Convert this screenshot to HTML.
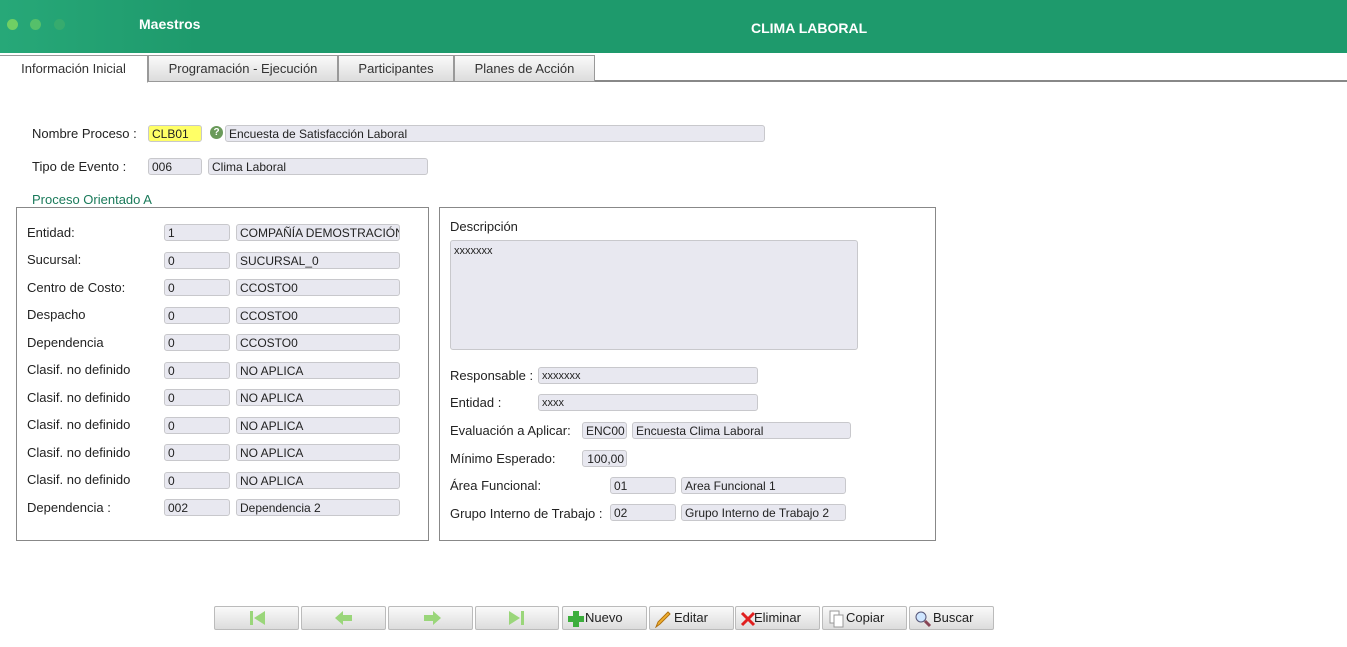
<!DOCTYPE html>
<html><head><meta charset="utf-8"><style>
*{margin:0;padding:0;box-sizing:border-box}
body{width:1347px;height:647px;background:#fff;position:relative;overflow:hidden;font-family:"Liberation Sans",sans-serif;color:#222}
.hdr{position:absolute;left:0;top:0;width:1347px;height:53px;background:linear-gradient(90deg,#27a878 0,#1e9a6c 200px,#1e9a6c)}
.dot{position:absolute;top:19px;width:11px;height:11px;border-radius:50%}
.t{position:absolute;font-size:13px;white-space:nowrap}
.i{position:absolute;height:17px;border:1px solid #c8c8cc;border-radius:3px;background:#e8e8f0;font-size:12px;padding-left:3px;line-height:17px;white-space:nowrap;overflow:hidden}
.tab{position:absolute;top:55px;height:27px;border:1px solid #999;background:linear-gradient(#fafafa,#dcdcdc);font-size:13px;text-align:center;line-height:25px;color:#333}
.box{position:absolute;border:1px solid #888}
.b{position:absolute;top:606px;width:85px;height:24px;border:1px solid #bbb;border-radius:2px;background:linear-gradient(#fafafa,#dcdcdc);font-size:13px;line-height:22px;color:#222}
</style></head><body>
<div class="hdr">
<div class="dot" style="left:7px;background:#6fcf64"></div>
<div class="dot" style="left:30px;background:#55c06a"></div>
<div class="dot" style="left:54px;background:#36ab6e"></div>
<div class="t" style="left:139px;top:16px;color:#fff;font-weight:bold;font-size:14px">Maestros</div>
<div class="t" style="left:751px;top:20px;color:#fff;font-weight:bold;font-size:14px">CLIMA LABORAL</div>
</div>
<div style="position:absolute;left:0;top:80px;width:1347px;height:2px;background:#888"></div>
<div class="tab" style="left:0;width:148px;background:#fff;border-bottom-color:#fff;border-left:none;height:28px">Información Inicial</div>
<div class="tab" style="left:148px;width:190px">Programación - Ejecución</div>
<div class="tab" style="left:338px;width:116px">Participantes</div>
<div class="tab" style="left:454px;width:141px">Planes de Acción</div>

<div class="t" style="left:32px;top:126px">Nombre Proceso :</div>
<div class="i" style="left:148px;top:125px;width:54px;background:#ffff66">CLB01</div>
<div style="position:absolute;left:210px;top:126px;width:13px;height:13px;border-radius:50%;background:#6a9a5a;color:#fff;font-size:10px;text-align:center;line-height:13px;font-weight:bold">?</div>
<div class="i" style="left:225px;top:125px;width:540px">Encuesta de Satisfacción Laboral</div>
<div class="t" style="left:32px;top:159px">Tipo de Evento :</div>
<div class="i" style="left:148px;top:158px;width:54px">006</div>
<div class="i" style="left:208px;top:158px;width:220px">Clima Laboral</div>
<div class="t" style="left:32px;top:192px;color:#1a7a5a">Proceso Orientado A</div>

<div class="box" style="left:16px;top:207px;width:413px;height:334px"></div>
<div class="box" style="left:439px;top:207px;width:497px;height:334px"></div>

<div class="t" style="left:27px;top:225px">Entidad:</div><div class="i" style="left:164px;top:224px;width:66px">1</div><div class="i" style="left:236px;top:224px;width:164px">COMPAÑÍA DEMOSTRACIÓN</div>
<div class="t" style="left:27px;top:252px">Sucursal:</div><div class="i" style="left:164px;top:252px;width:66px">0</div><div class="i" style="left:236px;top:252px;width:164px">SUCURSAL_0</div>
<div class="t" style="left:27px;top:280px">Centro de Costo:</div><div class="i" style="left:164px;top:279px;width:66px">0</div><div class="i" style="left:236px;top:279px;width:164px">CCOSTO0</div>
<div class="t" style="left:27px;top:307px">Despacho</div><div class="i" style="left:164px;top:307px;width:66px">0</div><div class="i" style="left:236px;top:307px;width:164px">CCOSTO0</div>
<div class="t" style="left:27px;top:335px">Dependencia</div><div class="i" style="left:164px;top:334px;width:66px">0</div><div class="i" style="left:236px;top:334px;width:164px">CCOSTO0</div>
<div class="t" style="left:27px;top:362px">Clasif. no definido</div><div class="i" style="left:164px;top:362px;width:66px">0</div><div class="i" style="left:236px;top:362px;width:164px">NO APLICA</div>
<div class="t" style="left:27px;top:390px">Clasif. no definido</div><div class="i" style="left:164px;top:389px;width:66px">0</div><div class="i" style="left:236px;top:389px;width:164px">NO APLICA</div>
<div class="t" style="left:27px;top:417px">Clasif. no definido</div><div class="i" style="left:164px;top:417px;width:66px">0</div><div class="i" style="left:236px;top:417px;width:164px">NO APLICA</div>
<div class="t" style="left:27px;top:445px">Clasif. no definido</div><div class="i" style="left:164px;top:444px;width:66px">0</div><div class="i" style="left:236px;top:444px;width:164px">NO APLICA</div>
<div class="t" style="left:27px;top:472px">Clasif. no definido</div><div class="i" style="left:164px;top:472px;width:66px">0</div><div class="i" style="left:236px;top:472px;width:164px">NO APLICA</div>
<div class="t" style="left:27px;top:500px">Dependencia :</div><div class="i" style="left:164px;top:499px;width:66px">002</div><div class="i" style="left:236px;top:499px;width:164px">Dependencia 2</div>

<div class="t" style="left:450px;top:219px">Descripción</div>
<div class="i" style="left:450px;top:240px;width:408px;height:110px;font-size:11px;padding-top:3px;line-height:14px">xxxxxxx</div>
<div class="t" style="left:450px;top:368px">Responsable :</div><div class="i" style="left:538px;top:367px;width:220px;font-size:11px">xxxxxxx</div>
<div class="t" style="left:450px;top:395px">Entidad :</div><div class="i" style="left:538px;top:394px;width:220px;font-size:11px">xxxx</div>
<div class="t" style="left:450px;top:423px">Evaluación a Aplicar:</div><div class="i" style="left:582px;top:422px;width:45px">ENC00</div><div class="i" style="left:632px;top:422px;width:219px">Encuesta Clima Laboral</div>
<div class="t" style="left:450px;top:451px">Mínimo Esperado:</div><div class="i" style="left:582px;top:450px;width:45px;text-align:right;padding-right:2px">100,00</div>
<div class="t" style="left:450px;top:478px">Área Funcional:</div><div class="i" style="left:610px;top:477px;width:66px">01</div><div class="i" style="left:681px;top:477px;width:165px">Area Funcional 1</div>
<div class="t" style="left:450px;top:506px">Grupo Interno de Trabajo :</div><div class="i" style="left:610px;top:504px;width:66px">02</div><div class="i" style="left:681px;top:504px;width:165px">Grupo Interno de Trabajo 2</div>

<div class="b" style="left:214px"><svg width="85" height="22"><rect x="35" y="4" width="3" height="14" fill="#9ad67a"/><path d="M50 4 L39 11 L50 18Z" fill="#9ad67a"/></svg></div>
<div class="b" style="left:301px"><svg width="85" height="22"><path d="M33 11 L41 4 V8 H50 V14 H41 V18Z" fill="#9ad67a"/></svg></div>
<div class="b" style="left:388px"><svg width="85" height="22"><path d="M52 11 L44 4 V8 H35 V14 H44 V18Z" fill="#9ad67a"/></svg></div>
<div class="b" style="left:475px;width:84px"><svg width="85" height="22"><path d="M33 4 L44 11 L33 18Z" fill="#9ad67a"/><rect x="45" y="4" width="3" height="14" fill="#9ad67a"/></svg></div>
<div class="b" style="left:562px"><svg width="18" height="18" style="position:absolute;left:4px;top:3px"><path d="M6 1H12V6H17V12H12V17H6V12H1V6H6Z" fill="#3cae3c"/></svg><span style="position:absolute;left:22px">Nuevo</span></div>
<div class="b" style="left:649px"><svg width="18" height="18" style="position:absolute;left:4px;top:3px"><path d="M2 17 L4 12 L14 2 L16 4 L6 14Z" fill="#f0b030" stroke="#b07010"/></svg><span style="position:absolute;left:24px">Editar</span></div>
<div class="b" style="left:735px"><svg width="16" height="16" style="position:absolute;left:4px;top:4px"><path d="M2 2 L14 14 M14 2 L2 14" stroke="#e02020" stroke-width="3"/></svg><span style="position:absolute;left:18px">Eliminar</span></div>
<div class="b" style="left:822px"><svg width="16" height="18" style="position:absolute;left:6px;top:3px"><rect x="1" y="1" width="9" height="12" fill="#fff" stroke="#999"/><rect x="5" y="5" width="9" height="12" fill="#fff" stroke="#999"/></svg><span style="position:absolute;left:23px">Copiar</span></div>
<div class="b" style="left:909px"><svg width="18" height="18" style="position:absolute;left:4px;top:3px"><circle cx="7" cy="7" r="5" fill="#cfe6ff" stroke="#557"/><path d="M11 11 L16 16" stroke="#845" stroke-width="3"/></svg><span style="position:absolute;left:23px">Buscar</span></div>
</body></html>
